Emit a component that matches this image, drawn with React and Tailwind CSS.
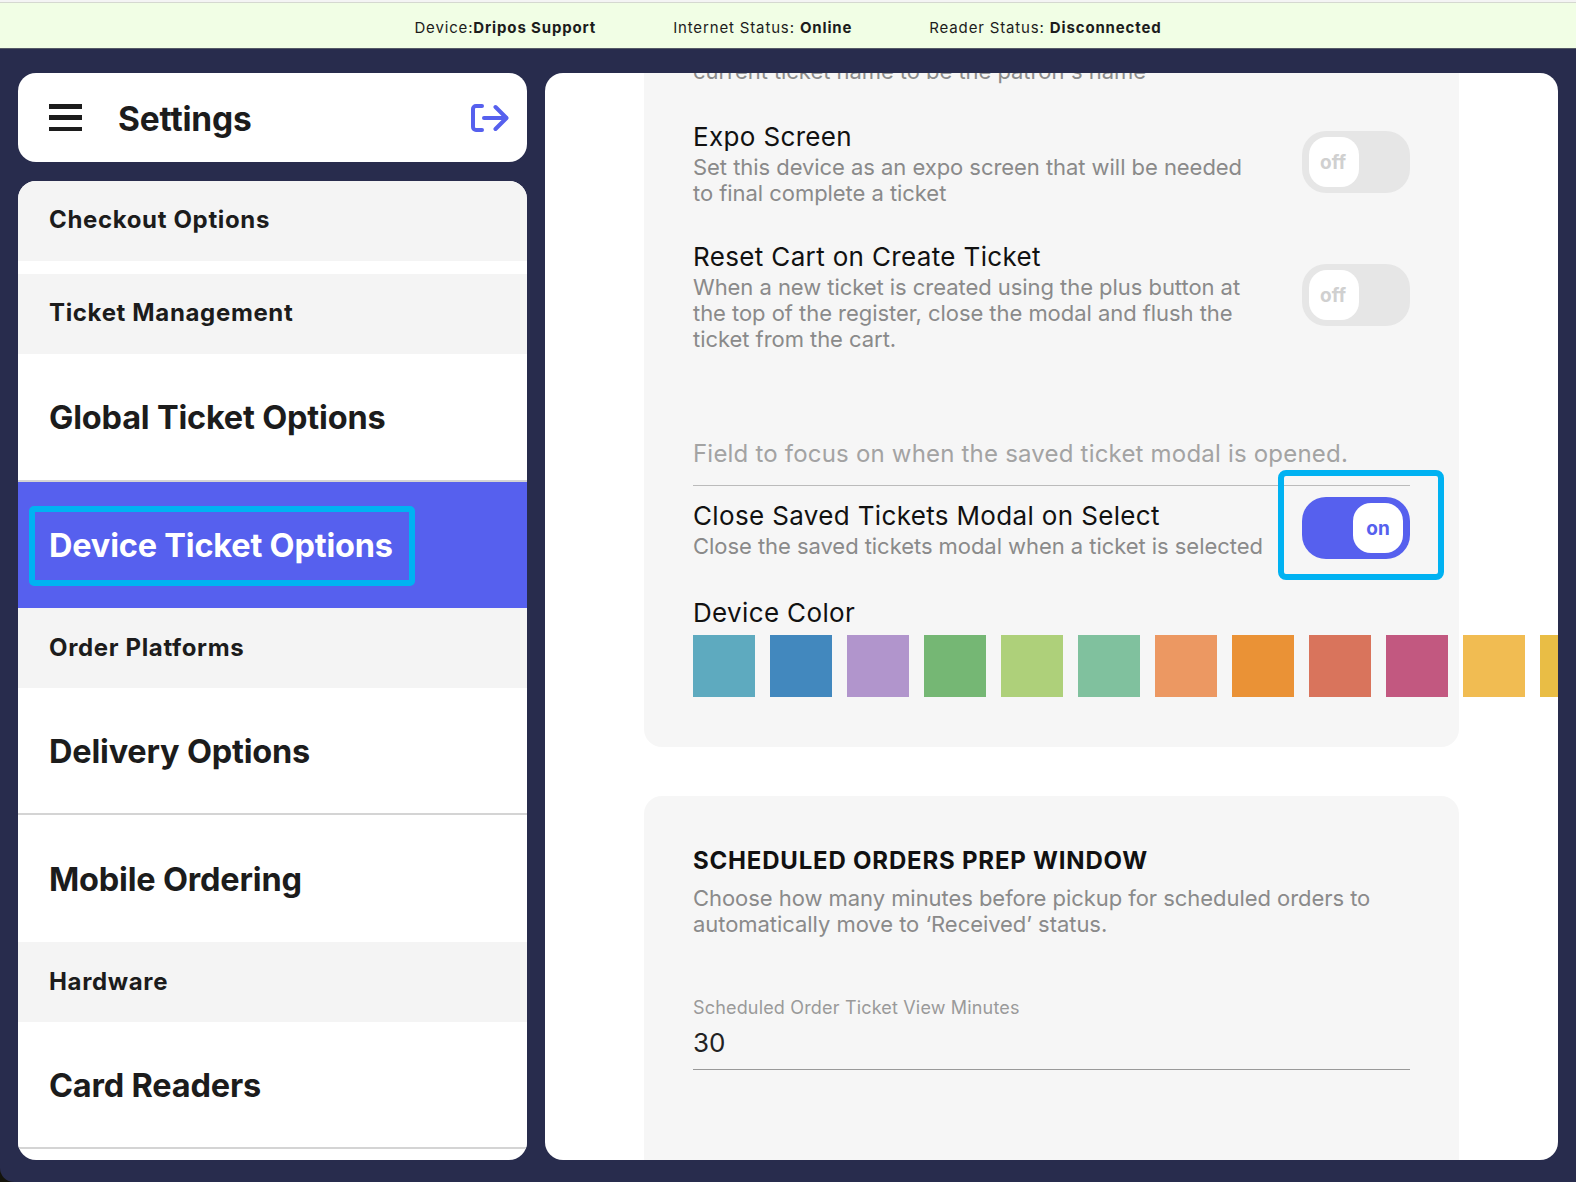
const NAV = [
  { label: "Checkout Options", kind: "small" },
  { kind: "gap" },
  { label: "Ticket Management", kind: "small" },
  { label: "Global Ticket Options", kind: "big", border: true, tall: true },
  { label: "Device Ticket Options", kind: "active" },
  { label: "Order Platforms", kind: "small", low: true },
  { label: "Delivery Options", kind: "big", border: true },
  { label: "Mobile Ordering", kind: "big" },
  { label: "Hardware", kind: "small", low: true },
  { label: "Card Readers", kind: "big", border: true },
];

const COLORS = [
  "#5eaabf",
  "#4288be",
  "#b195cc",
  "#75b774",
  "#aed07a",
  "#80c19e",
  "#ec9862",
  "#ea9236",
  "#d9745c",
  "#c25880",
  "#f1bc52",
  "#e9bd45",
];

function NavItem({ item }) {
  if (item.kind === "gap") return <div className="h-[13px] shrink-0 bg-white" />;

  if (item.kind === "small") {
    return (
      <div
        className={`flex h-[80px] shrink-0 items-center bg-[#f4f4f4] pl-[31px] text-[24px] font-bold tracking-[0.65px] text-[#1c1c1c] ${
          item.low ? "" : "pb-[2px]"
        }`}
      >
        {item.label}
      </div>
    );
  }

  if (item.kind === "active") {
    return (
      <div className="relative flex h-[126px] shrink-0 items-center bg-[#5660ee] pt-[2px] pl-[31px] text-[32.5px] font-bold tracking-[-0.2px] text-white">
        {item.label}
        <div className="absolute top-[24px] left-[11px] h-[80px] w-[386px] rounded-[5px] border-[6px] border-[#00b2f2]" />
      </div>
    );
  }

  return (
    <div
      className={`flex shrink-0 items-center bg-white pl-[31px] text-[32.5px] font-bold tracking-[-0.2px] text-[#1c1c1c] ${
        item.tall ? "h-[128px] pt-[2px]" : "h-[127px] pt-[4px]"
      } ${item.border ? "border-b-2 border-[#d4d4d4]" : ""}`}
    >
      {item.label}
    </div>
  );
}

function Toggle({ on }) {
  return (
    <div
      className={`flex h-[62px] w-[108px] shrink-0 items-center rounded-[24px] px-[7px] ${
        on ? "justify-end bg-[#5660ee]" : "justify-start bg-[#e6e6e6]"
      }`}
    >
      <div
        className={`flex h-[50px] w-[50px] items-center justify-center rounded-[18px] bg-white pt-[2px] text-[19px] font-bold ${
          on ? "text-[#5660ee]" : "text-[#d0d0d0]"
        }`}
      >
        <span className={on ? "" : "-ml-[2px]"}>{on ? "on" : "off"}</span>
      </div>
    </div>
  );
}

function ToggleRow({ title, lines, on, marked }) {
  return (
    <div className="relative flex items-center justify-between">
      <div>
        <div className="text-[26px] leading-[30px] tracking-[0.35px] text-[#111]">{title}</div>
        <div className="mt-[2px] -mb-[4px] text-[22px] leading-[26px] tracking-[-0.05px] text-[#8a8a8a]">
          {lines.map((line) => (
            <div key={line}>{line}</div>
          ))}
        </div>
      </div>
      <Toggle on={on} />
      {marked && (
        <div className="absolute -top-[27px] -right-[34px] h-[110px] w-[166px] rounded-[8px] border-[6px] border-[#00b2f2]" />
      )}
    </div>
  );
}

function LogoutIcon() {
  return (
    <svg width="38" height="28" viewBox="0 0 38 28" fill="none" stroke="#5660ee" strokeWidth="4" strokeLinecap="round" strokeLinejoin="round">
      <path d="M11 2H5a3 3 0 0 0-3 3v18a3 3 0 0 0 3 3h6" />
      <path d="M13 14h22" />
      <path d="M24.5 3l11 11-11 11" />
    </svg>
  );
}

export default function App() {
  return (
    <div className="flex h-screen flex-col overflow-hidden bg-[#14140c] font-['Inter',sans-serif]">
      <div className="h-[3px] shrink-0 border-b border-[#d5d8d0] bg-[#f4f4f4]" />
      <div className="flex h-[46px] shrink-0 items-center justify-center gap-[77px] border-b border-[#555a66] bg-[#f1fee5] pt-[6px] text-[15px] tracking-[0.85px] text-[#1c1c1c]">
        <div>
          Device:<span className="font-bold">Dripos Support</span>
        </div>
        <div>
          Internet Status: <span className="font-bold">Online</span>
        </div>
        <div>
          Reader Status: <span className="font-bold">Disconnected</span>
        </div>
      </div>

      <div className="flex min-h-0 flex-1 gap-[18px] rounded-bl-[14px] bg-[#282c4d] px-[18px] pt-[24px] pb-[22px]">
        <div className="flex w-[509px] shrink-0 flex-col gap-[19px]">
          <div className="flex h-[89px] shrink-0 items-center rounded-[18px] bg-white pr-[18px] pl-[31px]">
            <div className="flex h-[27px] w-[33px] flex-col justify-between">
              <div className="h-[4.5px] bg-[#1c1c1c]" />
              <div className="h-[4.5px] bg-[#1c1c1c]" />
              <div className="h-[4.5px] bg-[#1c1c1c]" />
            </div>
            <div className="ml-[36px] flex-1 pt-[3px] text-[33.5px] font-bold tracking-[-0.2px] text-[#1c1c1c]">Settings</div>
            <LogoutIcon />
          </div>
          <div className="flex min-h-0 flex-1 flex-col overflow-hidden rounded-[18px] bg-white">
            {NAV.map((item, i) => (
              <NavItem key={i} item={item} />
            ))}
          </div>
        </div>

        <div className="min-w-0 flex-1 overflow-hidden rounded-[18px] bg-white px-[99px]">
          <div className="-mt-[15px] flex flex-col gap-[49px]">
            <div className="rounded-b-[18px] bg-[#f6f6f6] px-[49px] pb-[50px]">
              <div className="text-[22px] leading-[26px] tracking-[-0.05px] text-[#8a8a8a]">current ticket name to be the patron's name</div>
              <div className="mt-[38px]">
                <ToggleRow
                  title="Expo Screen"
                  lines={["Set this device as an expo screen that will be needed", "to final complete a ticket"]}
                />
              </div>
              <div className="mt-[40px]">
                <ToggleRow
                  title="Reset Cart on Create Ticket"
                  lines={[
                    "When a new ticket is created using the plus button at",
                    "the top of the register, close the modal and flush the",
                    "ticket from the cart.",
                  ]}
                />
              </div>
              <div className="mt-[91px] border-b border-[#bbbbbb] pb-[16px] text-[24px] leading-[30px] tracking-[0.2px] text-[#a3a3a3]">
                Field to focus on when the saved ticket modal is opened.
              </div>
              <div className="mt-[11px]">
                <ToggleRow
                  title="Close Saved Tickets Modal on Select"
                  lines={["Close the saved tickets modal when a ticket is selected"]}
                  on
                  marked
                />
              </div>
              <div className="mt-[39px] text-[26px] leading-[30px] tracking-[0.35px] text-[#111]">Device Color</div>
              <div className="mt-[7px] flex gap-[15px]">
                {COLORS.map((color) => (
                  <div key={color} className="h-[62px] w-[62px] shrink-0" style={{ backgroundColor: color }} />
                ))}
              </div>
            </div>

            <div className="rounded-t-[18px] bg-[#f6f6f6] px-[49px] pt-[50px] pb-[120px]">
              <div className="text-[24px] leading-[30px] font-bold tracking-[0.8px] text-[#111]">SCHEDULED ORDERS PREP WINDOW</div>
              <div className="mt-[9px] text-[22px] leading-[26px] tracking-[-0.05px] text-[#8a8a8a]">
                <div>Choose how many minutes before pickup for scheduled orders to</div>
                <div>automatically move to ‘Received’ status.</div>
              </div>
              <div className="mt-[61px] text-[18px] leading-[20px] tracking-[0.17px] text-[#9a9a9a]">Scheduled Order Ticket View Minutes</div>
              <div className="mt-[10px] border-b border-[#999999] pb-[11px] text-[26px] leading-[30px] text-[#222]">30</div>
            </div>
          </div>
        </div>
      </div>
    </div>
  );
}
